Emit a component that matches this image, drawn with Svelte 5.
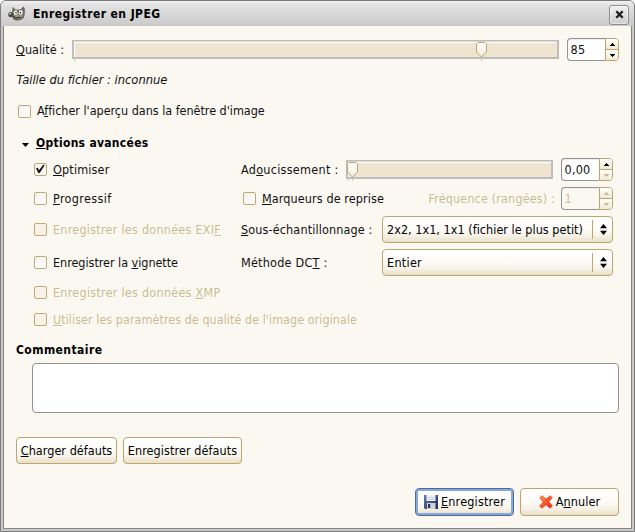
<script>
  // Spreads the letters of a label so that it spans the given width.
  function fit(node, width) {
    const n = node.textContent.length;
    const natural = node.getBoundingClientRect().width;
    node.style.letterSpacing = `${(width - natural) / n}px`;
  }
</script>

{#snippet label(before, key, after, width)}
  <span class="label" use:fit={width}>{before}<u>{key}</u>{after}</span>
{/snippet}

{#snippet check(before, key, after, width, checked, disabled)}
  <div class="check" class:disabled>
    <span class="box">
      {#if checked}
        <svg width="13" height="13" viewBox="0 0 13 13"><path d="M2 5.2 L3.8 4.8 L5 7.2 L9.2 1.7 L10.8 2 L5.7 10 L4.3 10 Z" fill="#111" /></svg>
      {/if}
    </span>
    {@render label(before, key, after, width)}
  </div>
{/snippet}

{#snippet spin(value, width, downOff, disabled)}
  <div class="spin" class:disabled>
    <span class="value"><span class="label" use:fit={width}>{value}</span></span>
    <span class="steps">
      <span class="step"><svg class:off={disabled} width="5" height="3" viewBox="0 0 5 3" shape-rendering="crispEdges"><path d="M2 0h1v1h1v1h1v1H0V2h1V1h1z" /></svg></span>
      <span class="step"><svg class:off={disabled || downOff} width="5" height="3" viewBox="0 0 5 3" shape-rendering="crispEdges"><path d="M0 0h5v1H4v1H3v1H2V2H1V1H0z" /></svg></span>
    </span>
  </div>
{/snippet}

{#snippet scale(pos, mark)}
  <div class="scale">
    <div class="trough"></div>
    <i class="tick" style="left:{mark}px"></i>
    <i class="tick" style="left:2px"></i>
    <svg class="thumb" style="left:{pos}px" width="11" height="16" viewBox="0 0 11 16">
      <defs><linearGradient id="thumbfill" x2="0" y2="1"><stop offset="0" stop-color="#fff" /><stop offset="1" stop-color="#f3ecdc" /></linearGradient></defs>
      <path d="M2 .5H9L10.5 2V10L5.5 15L.5 10V2Z" fill="url(#thumbfill)" stroke="#bda66d" />
    </svg>
  </div>
{/snippet}

{#snippet combo(text, width)}
  <div class="combo">
    <span class="label" use:fit={width}>{text}</span>
    <span class="handle">
      <svg width="7" height="11" viewBox="0 0 7 11"><path d="M0 4.2L3.5 0L7 4.2ZM0 6.8L3.5 11L7 6.8Z" fill="#000" /></svg>
    </span>
  </div>
{/snippet}

<div class="window">
  <header>
    <svg class="wilber" width="18" height="16" viewBox="0 0 18 16">
      <path d="M4.2 6L4.6 .8L7.4 3.4Q10.5 4.3 13 3L15.6 .3L16.9 3Q17.2 8 15.8 12Q12 15.3 7 14.3Q4.2 13 4 10Z" fill="#6b675c" />
      <path d="M6 8Q10 6 15 8Q15 11.5 12 12.5Q8 13 5.5 10.5Z" fill="#98958a" />
      <ellipse cx="2.6" cy="8.6" rx="2.3" ry="2.7" fill="#45423a" />
      <circle cx="2.2" cy="7.7" r="1" fill="#c9c6bd" />
      <ellipse cx="7.6" cy="6.6" rx="1.9" ry="2.2" fill="#fff" />
      <ellipse cx="12.8" cy="6.3" rx="1.9" ry="2.2" fill="#fff" />
      <circle cx="8" cy="6.8" r=".8" fill="#111" />
      <circle cx="12.4" cy="6.6" r=".8" fill="#111" />
      <path d="M4.6 10.2Q8 12.8 13 11.2" fill="none" stroke="#33302a" stroke-width="1" />
    </svg>
    <span class="label strong" use:fit={127.5}>Enregistrer en JPEG</span>
    <span class="close">
      <svg width="9" height="9" viewBox="0 0 9 9"><path d="M1.3 1.3L7.7 7.7M7.7 1.3L1.3 7.7" stroke="#1d1d1d" stroke-width="2.3" /></svg>
    </span>
  </header>

  <main>
    <div class="quality">
      <div class="qlabel">{@render label('', 'Q', 'ualité :', 48)}</div>
      {@render scale(404, 409)}
      {@render spin('85', 15)}
    </div>
    <div class="size"><span class="label italic" use:fit={151}>Taille du fichier : inconnue</span></div>
    <div class="preview">{@render check('A', 'f', "ficher l'aperçu dans la fenêtre d'image", 228)}</div>

    <div class="expander">
      <svg width="7" height="4" viewBox="0 0 7 4"><path d="M0 0H7L3.5 4Z" /></svg>
      <span class="label strong" use:fit={112.5}><u>O</u>ptions avancées</span>
    </div>

    <div class="options">
      {@render check('', 'O', 'ptimiser', 56.5, true)}
      <div class="row">
        {@render label('Ad', 'o', 'ucissement :', 97.5)}
        <div class="soft">
          {@render scale(1, 6)}
          {@render spin('0,00', 26, true)}
        </div>
      </div>

      {@render check('', 'P', 'rogressif', 58.5)}
      <div class="row">
        <div class="restart">{@render check('', 'M', 'arqueurs de reprise', 122)}</div>
        <div class="freq disabled">
          <span class="label" use:fit={126.5}>Fréquence (rangées) :</span>
          {@render spin('1', 7, true, true)}
        </div>
      </div>

      {@render check('Enregistrer les données EXI', 'F', '', 168, false, true)}
      <div class="row">
        {@render label('', 'S', 'ous-échantillonnage :', 131.5)}
        {@render combo('2x2, 1x1, 1x1 (fichier le plus petit)', 196)}
      </div>

      {@render check('Enregistrer la ', 'v', 'ignette', 125)}
      <div class="row">
        {@render label('Méthode DC', 'T', ' :', 86.5)}
        {@render combo('Entier', 35)}
      </div>

      {@render check('Enregistrer les données ', 'X', 'MP', 167.5, false, true)}
      <span></span>
      {@render check('', 'U', "tiliser les paramètres de qualité de l'image originale", 304, false, true)}
    </div>

    <div class="heading"><span class="label strong" use:fit={86.5}>Commentaire</span></div>
    <div class="comment"></div>

    <div class="defaults">
      <div class="button load">{@render label('', 'C', 'harger défauts', 91.5)}</div>
      <div class="button store"><span class="label" use:fit={109.5}>Enregistrer défauts</span></div>
    </div>

    <div class="actions">
      <div class="button save">
        <svg width="14" height="14" viewBox="0 0 14 14">
          <defs>
            <linearGradient id="disk" x2="1" y2="1"><stop offset="0" stop-color="#6c7ba6" /><stop offset="1" stop-color="#182754" /></linearGradient>
          </defs>
          <path d="M0 0H14V14H1L0 13Z" fill="url(#disk)" />
          <rect x="2.5" y="0" width="9" height="6" fill="#eef2fa" />
          <path d="M3.5 2.5H10.5M3.5 4.5H10.5" stroke="#b9c4dc" stroke-width=".8" />
          <rect x="3" y="8" width="8.5" height="6" fill="#cdd1da" />
          <rect x="4" y="9" width="2.2" height="4" fill="#27365f" />
        </svg>
        {@render label('', 'E', 'nregistrer', 64)}
      </div>
      <div class="button cancel">
        <svg width="14" height="14" viewBox="0 0 14 14">
          <defs>
            <linearGradient id="cross" x2="1" y2="1"><stop offset="0" stop-color="#ff9a6b" /><stop offset=".5" stop-color="#f8562b" /><stop offset="1" stop-color="#f21a0c" /></linearGradient>
          </defs>
          <path d="M.8 2.8L2.9 .7L7 4L11.2 .7L13.2 2.8L9.7 6.8L13.4 10.8L11 13.3L7 9.7L2.9 13.3L.7 11L4.2 7Z" fill="url(#cross)" stroke="#e2471f" stroke-width=".8" />
        </svg>
        {@render label('A', 'n', 'nuler', 44.5)}
      </div>
    </div>
  </main>
</div>

<style>
  :global(body) { margin: 0; background: #fff; }
  .window {
    box-sizing: border-box; width: 635px; height: 532px; padding: 0 2px 2px;
    border: 1px solid #7c7c7c; border-radius: 6px 6px 0 0;
    background: #c9c9c9; overflow: hidden;
    font: 12.5px/16px "DejaVu Sans Condensed", "DejaVu Sans", sans-serif; color: #111;
  }
  .label { white-space: pre; display: inline-block; flex: none; }
  u { text-decoration: underline 1px; text-underline-offset: 1px; text-decoration-skip-ink: none; }
  .strong { font-size: 12px; font-weight: 700; color: #000; }
  .italic { margin-left: .5px; font-size: 12.8px; font-style: italic; }
  header {
    height: 25px; margin: 0 -2px; padding: 0 5px 0 7px; box-sizing: border-box;
    display: flex; align-items: center;
    background: linear-gradient(#f2f2f2, #e2e2e2 15%, #cacaca);
  }
  .wilber { margin-right: 7px; }
  .close {
    box-sizing: border-box; margin: 2px 0 0 auto; width: 20px; height: 20px; border: 1px solid #8d8d8d; border-radius: 3px;
    background: linear-gradient(#f0f0f0, #cdcdcd); box-shadow: inset 0 0 0 1px #ffffff80;
    display: flex; align-items: center; justify-content: center;
  }
  main {
    box-sizing: border-box; height: 503px; padding: 12px 11px 0 12px;
    border: 1px solid #858585; border-top: 0; background: #fbf8f1;
  }
  .quality { display: flex; height: 23px; align-items: center; }
  .qlabel { width: 56px; }
  .quality .scale { width: 487px; margin-right: 8px; }
  .scale { position: relative; height: 19px; }
  .trough { box-sizing: border-box; height: 19px; background: #eee4cf; border: 2px solid #bfbdba; border-width: 1px 2px 2px; box-shadow: inset 0 1px #dcd8d0, inset 0 2px #fff, inset 1px 0 #fff; }
  .tick { position: absolute; top: 19px; height: 2px; width: 1px; background: #cfcdc9; }
  .thumb { position: absolute; top: 2px; }
  .spin { box-sizing: border-box; display: flex; width: 52px; height: 23px; }
  .value {
    box-sizing: border-box; width: 38px; padding: 3px 0 0 2.5px; background: #fff;
    border: 1px solid #929292; border-right: 0; border-radius: 4px 0 0 4px; box-shadow: inset 0 1px #eee;
  }
  .steps { box-sizing: border-box; width: 14px; border: 1px solid #bda66d; border-radius: 0 4px 4px 0; display: flex; flex-direction: column; overflow: hidden; }
  .step { flex: 1; display: flex; align-items: center; justify-content: center; background: linear-gradient(#fff, #f1e9d6); }
  .step + .step { border-top: 1px solid #bda66d; }
  .off { fill: #cfbc8d; }
  .spin.disabled .value { background: #fbf8f1; }
  .disabled { color: #cdba8c; text-shadow: 1px 1px #fff; }
  .size { margin-top: 11px; height: 16px; }
  .preview { margin: 15px 0 0 2px; }
  .check { display: flex; align-items: center; height: 16px; }
  .box {
    box-sizing: border-box; flex: none; width: 13px; height: 13px; margin-right: 6px;
    border: 1px solid #c0aa73; border-radius: 2px; background: linear-gradient(135deg, #f4f2f0, #fff); display: flex;
  }
  .box svg { flex: none; margin: -1px; }
  .disabled .box { background: #f8f3e9; }
  .expander { display: flex; align-items: center; height: 16px; margin: 16px 0 7px 6px; }
  .expander svg { margin: 3px 7px 0 0; }
  .options {
    display: grid; grid-template-columns: 207px 372px; grid-template-rows: 23px 23px 27px 27px 21px 21px;
    row-gap: 6px; margin-left: 18px; align-items: center;
  }
  .row { display: flex; align-items: center; justify-content: space-between; }
  .soft { display: flex; align-items: center; gap: 8px; }
  .soft .scale { width: 207px; }
  .restart { padding-left: 2px; }
  .freq { display: flex; align-items: center; gap: 6px; }
  .combo, .button {
    box-sizing: border-box; height: 27px; border: 1px solid #bda66d; border-radius: 4px;
    background: linear-gradient(#fff, #fdfbf7 50%, #f7f2e7 75%, #e9dfc8);
    display: flex; align-items: center;
  }
  .combo { width: 231px; padding: 0 5px 0 4px; color: #000; justify-content: space-between; }
  .handle { display: flex; align-items: center; height: 19px; padding-left: 7px; border-left: 1px solid #bda66d; }
  .heading { margin-top: 12px; height: 16px; }
  .comment { box-sizing: border-box; width: 587px; height: 50px; margin: 5px 0 0 16px; border: 1px solid #929292; border-radius: 4px; background: #fff; }
  .defaults { display: flex; gap: 6px; margin-top: 24px; }
  .button { justify-content: center; color: #000; }
  .load { width: 101px; }
  .store { width: 119px; }
  .actions { display: flex; justify-content: flex-end; gap: 6px; margin: 24px 1px 0 0; }
  .actions .button { width: 99px; height: 28px; gap: 3px; }
  .actions .save { border-color: #4d6c9c; box-shadow: inset 0 0 0 2px #86a8da; }
</style>
